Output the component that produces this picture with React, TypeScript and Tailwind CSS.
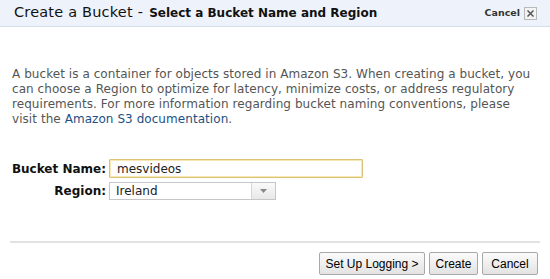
import React from "react";

export default function App() {
  const btn =
    "h-[23px] px-[4px] whitespace-nowrap border border-[#a8a8a8] rounded-[2px] bg-gradient-to-b from-[#fbfbfb] to-[#e3e3e3] text-[12px] text-black font-['Liberation_Sans',Arial,sans-serif] leading-none";
  return (
    <div className="w-[550px] h-[279px] bg-white font-['DejaVu_Sans',Verdana,sans-serif] overflow-hidden flex flex-col">
      <div className="h-[27px] shrink-0 bg-[#eef3fb] border-b border-[#d6dde8] flex items-center pl-[14px] pr-[13px]">
        <div className="flex items-baseline text-[#111] whitespace-nowrap">
          <span className="text-[14.5px] tracking-[0.2px]">Create a Bucket -</span>
          <span className="text-[12px] font-bold ml-[6px]">Select a Bucket Name and Region</span>
        </div>
        <div className="ml-auto flex items-center gap-[4px]">
          <span className="text-[9.5px] font-bold text-[#333]">Cancel</span>
          <span className="w-[13px] h-[13px] border border-[#b9b9b9] bg-[#f3f3f3] flex items-center justify-center">
            <svg width="7" height="7" viewBox="0 0 7 7">
              <path d="M0.5 0.5L6.5 6.5M6.5 0.5L0.5 6.5" stroke="#555" strokeWidth="1.5" />
            </svg>
          </span>
        </div>
      </div>
      <p className="mt-[40px] ml-[12px] w-[526px] text-[12px] tracking-[0.06px] leading-[15px] text-[#555]">
        A bucket is a container for objects stored in Amazon S3. When creating a bucket, you can choose a Region to optimize for latency, minimize costs, or address regulatory requirements. For more information regarding bucket naming conventions, please visit the <span className="text-[#1e4f85]">Amazon S3 documentation</span>.
      </p>
      <div className="mt-[32px] grid grid-cols-[106px_auto] gap-x-[3px] gap-y-[4px] items-center text-[12px]">
        <span className="text-right font-bold text-[#111]">Bucket Name:</span>
        <div className="w-[254px] h-[19px] border border-[#dcc274] shadow-[inset_0_0_0_1px_#f6e7b4] rounded-[1px] flex items-center pl-[7px] text-[#222]">
          mesvideos
        </div>
        <span className="text-right font-bold text-[#111]">Region:</span>
        <div className="w-[167px] h-[18px] border border-[#c6c6c6] flex items-stretch text-[#222]">
          <span className="flex-1 flex items-center pl-[6px]">Ireland</span>
          <span className="w-[24px] border-l border-[#d6d6d6] bg-gradient-to-b from-[#fafafa] to-[#e8e8e8] flex items-center justify-center">
            <svg width="7" height="4" viewBox="0 0 7 4">
              <path d="M0 0H7L3.5 4Z" fill="#888" />
            </svg>
          </span>
        </div>
      </div>
      <div className="mt-[41px] mx-[10px] border-t-2 border-[#e2e2e2]" />
      <div className="mt-[9px] flex justify-end gap-[4px] pr-[12px]">
        <button className={btn + " w-[106px]"}>Set Up Logging &gt;</button>
        <button className={btn + " w-[49px]"}>Create</button>
        <button className={btn + " w-[56px]"}>Cancel</button>
      </div>
    </div>
  );
}
